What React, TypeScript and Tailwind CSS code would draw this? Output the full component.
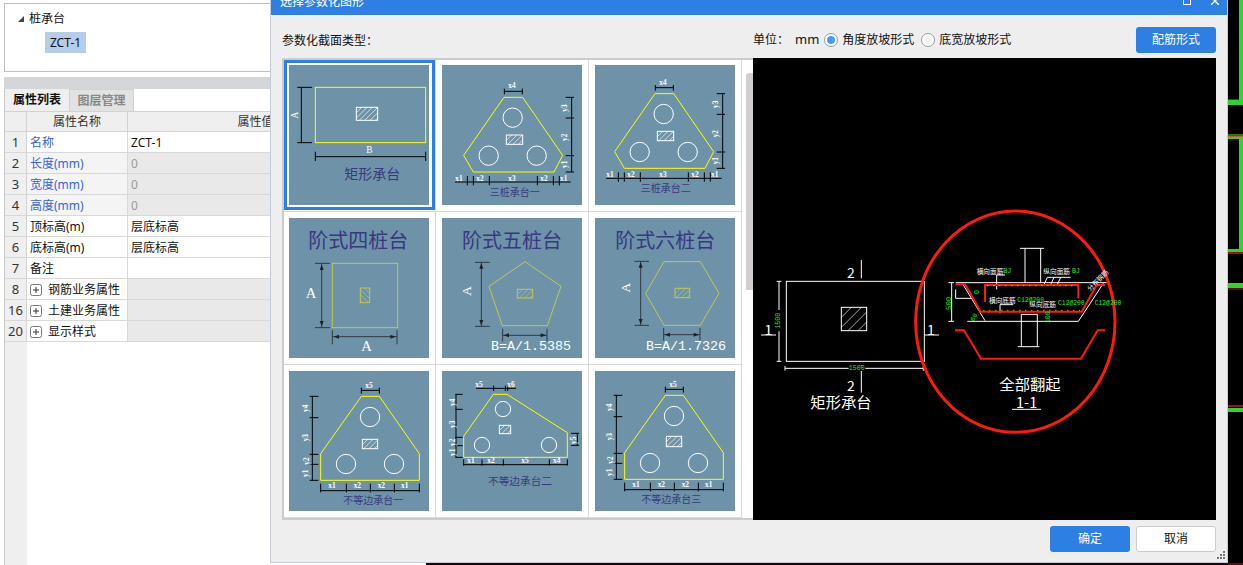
import React from 'react';

const rows = [
  { no: '1', name: '名称', value: 'ZCT-1', blue: true },
  { no: '2', name: '长度(mm)', value: '0', blue: true, locked: true },
  { no: '3', name: '宽度(mm)', value: '0', blue: true, locked: true },
  { no: '4', name: '高度(mm)', value: '0', blue: true, locked: true },
  { no: '5', name: '顶标高(m)', value: '层底标高' },
  { no: '6', name: '底标高(m)', value: '层底标高' },
  { no: '7', name: '备注', value: '' },
  { no: '8', name: '钢筋业务属性', group: true },
  { no: '16', name: '土建业务属性', group: true },
  { no: '20', name: '显示样式', group: true },
];

// all card drawings use a 420 unit box, shown at 140px (1px = 3 units)
function Card({ children }: { children: React.ReactNode }) {
  return (
    <svg viewBox="0 0 420 420" className="block h-[140px] w-[140px] bg-[#6e93a9]" fontFamily="'Noto Sans CJK SC', sans-serif">
      {children}
    </svg>
  );
}

function Lines({ d, color = '#000000' }: { d: string; color?: string }) {
  return <path d={d} fill="none" stroke={color} strokeWidth={3} />;
}

function Hatch({ x, y, w, h, color = '#ffffff', down = false }: { x: number; y: number; w: number; h: number; color?: string; down?: boolean }) {
  const step = 16;
  const marks = [];
  for (let i = step; i < w + h; i += step) {
    const x1 = Math.min(i, w);
    const y1 = i > w ? i - w : 0;
    const x2 = i > h ? i - h : 0;
    const y2 = Math.min(i, h);
    marks.push(
      down ? (
        <line key={i} x1={x + w - x1} y1={y + y1} x2={x + w - x2} y2={y + y2} stroke={color} strokeWidth={2} />
      ) : (
        <line key={i} x1={x + x1} y1={y + y1} x2={x + x2} y2={y + y2} stroke={color} strokeWidth={2} />
      ),
    );
  }
  return (
    <g>
      {marks}
      <rect x={x} y={y} width={w} height={h} fill="none" stroke={color} strokeWidth={3} />
    </g>
  );
}

function Tag({ x, y, t, rot = false }: { x: number; y: number; t: string; rot?: boolean }) {
  return (
    <text
      x={x}
      y={y}
      fill="#ffffff"
      fontSize={22}
      fontWeight={700}
      fontFamily="'Liberation Serif', serif"
      textAnchor="middle"
      dominantBaseline="central"
      transform={rot ? `rotate(-90 ${x} ${y})` : undefined}
    >
      {t}
    </text>
  );
}

function Title({ x, y, t, size = 30 }: { x: number; y: number; t: string; size?: number }) {
  return (
    <text x={x} y={y} fill="#38387f" fontSize={size} textAnchor="middle" dominantBaseline="central">
      {t}
    </text>
  );
}

function Holes({ pts, r = 29 }: { pts: number[][]; r?: number }) {
  return (
    <g>
      {pts.map((p) => (
        <circle key={p[0]} cx={p[0]} cy={p[1]} r={r} fill="none" stroke="#ffffff" strokeWidth={3} />
      ))}
    </g>
  );
}

function RectCard() {
  return (
    <Card>
      <rect x={79} y={67} width={331} height={166} fill="none" stroke="#ffff00" strokeWidth={3} />
      <Hatch x={202} y={127} w={64} h={39} />
      <Lines d="M37 67V233M25 67H69M25 233H69M79 275H410M79 260V288M410 260V288" />
      <text x={18} y={150} fill="#ffffff" fontSize={28} fontFamily="'Liberation Serif', serif" textAnchor="middle" dominantBaseline="central" transform="rotate(-90 18 150)">A</text>
      <text x={241} y={254} fill="#ffffff" fontSize={28} fontFamily="'Liberation Serif', serif" textAnchor="middle" dominantBaseline="central">B</text>
      <Title x={250} y={325} t="矩形承台" size={42} />
    </Card>
  );
}

function ThreePile({ dx, dy, title }: { dx: number; dy: number; title: string }) {
  return (
    <Card>
      <g transform={`translate(${dx} ${dy})`}>
        <polygon points="180,86 236,86 356,260 330,310 88,310 59,260" fill="none" stroke="#ffff00" strokeWidth={3} />
        <Holes pts={[[206, 147], [134, 261], [278, 261]]} />
        <Hatch x={187} y={199} w={49} h={28} />
        <Lines d="M181 68H235M181 60V77M235 60V77M383 86V310M365 86H390M365 148H390M365 261H390M365 310H390M33 340H380M70 322V350M88 322V350M136 322V350M280 322V350M328 322V350M346 322V350" />
        <Tag x={204} y={51} t="x4" />
        <Tag x={363} y={118} t="y3" rot />
        <Tag x={363} y={206} t="y2" rot />
        <Tag x={363} y={287} t="y1" rot />
        <Tag x={45} y={329} t="x1" />
        <Tag x={108} y={329} t="x2" />
        <Tag x={204} y={329} t="x3" />
        <Tag x={300} y={329} t="x2" />
        <Tag x={359} y={329} t="x1" />
        <Title x={212} y={368} t={title} />
      </g>
    </Card>
  );
}

function Arrows({ d }: { d: string }) {
  return <path d={d} fill="#1d2125" />;
}

function FourPile() {
  return (
    <Card>
      <Title x={208} y={64} t="阶式四桩台" size={60} />
      <rect x={130} y={136} width={196} height={193} fill="none" stroke="#c4c655" strokeWidth={3} />
      <Hatch x={214} y={210} w={28} h={44} color="#c4c655" down />
      <Lines color="#2f3a42" d="M98 136V329M78 136H123M78 329H123M130 356H324M130 336V379M324 336V379" />
      <Arrows d="M98 140L92 156H104ZM98 325L92 309H104ZM134 356L150 350V362ZM320 356L304 350V362Z" />
      <text x={66} y={224} fill="#ffffff" fontSize={44} fontFamily="'Liberation Serif', serif" textAnchor="middle" dominantBaseline="central">A</text>
      <text x={233} y={384} fill="#ffffff" fontSize={44} fontFamily="'Liberation Serif', serif" textAnchor="middle" dominantBaseline="central">A</text>
    </Card>
  );
}

function PolyPile({
  title, titleX, pts, hatch, vx, vy, hy, hx, ax, ay, formula, fx,
}: {
  title: string; titleX: number; pts: string; hatch: number[]; vx: number; vy: number[]; hy: number; hx: number[]; ax: number; ay: number; formula: string; fx: number;
}) {
  return (
    <Card>
      <Title x={titleX} y={64} t={title} size={60} />
      <polygon points={pts} fill="none" stroke="#c4c655" strokeWidth={3} />
      <Hatch x={hatch[0]} y={hatch[1]} w={hatch[2]} h={hatch[3]} color="#c4c655" />
      <Lines color="#2f3a42" d={`M${vx} ${vy[0]}V${vy[1]}M${vx - 19} ${vy[0]}H${vx + 25}M${vx - 19} ${vy[1]}H${vx + 25}M${hx[0]} ${hy}H${hx[1]}M${hx[0]} ${hy - 20}V${hy + 18}M${hx[1]} ${hy - 20}V${hy + 18}`} />
      <Arrows d={`M${vx} ${vy[0] + 3}L${vx - 6} ${vy[0] + 19}H${vx + 6}ZM${vx} ${vy[1] - 3}L${vx - 6} ${vy[1] - 19}H${vx + 6}ZM${hx[0] + 3} ${hy}L${hx[0] + 19} ${hy - 6}V${hy + 6}ZM${hx[1] - 3} ${hy}L${hx[1] - 19} ${hy - 6}V${hy + 6}Z`} />
      <text x={ax} y={ay} fill="#ffffff" fontSize={40} fontFamily="'Liberation Serif', serif" textAnchor="middle" dominantBaseline="central" transform={`rotate(-90 ${ax} ${ay})`}>A</text>
      <text x={fx} y={396} fill="#ffffff" fontSize={40} fontFamily="'Liberation Mono', monospace">{formula}</text>
    </Card>
  );
}

function UnequalA({ dx, dy, hatchY, hatchH, title, titleX }: { dx: number; dy: number; hatchY: number; hatchH: number; title: string; titleX: number }) {
  return (
    <Card>
      <g transform={`translate(${dx} ${dy})`}>
        <polygon points="217,76 271,76 391,248 391,328 95,328 95,248" fill="none" stroke="#ffff00" strokeWidth={3} />
        <Holes pts={[[243, 138], [171, 279], [315, 279]]} />
        <Hatch x={220} y={hatchY} w={46} h={hatchH} />
        <Lines d="M217 58H271M217 50V68M271 50V68M70 76V328M62 76H88M62 140H88M62 250H88M62 280H88M62 328H88M95 359H391M95 338V364M172 338V364M244 338V364M316 338V364M391 338V364" />
        <Tag x={240} y={44} t="x5" />
        <Tag x={51} y={112} t="y4" rot />
        <Tag x={51} y={200} t="y3" rot />
        <Tag x={51} y={270} t="y2" rot />
        <Tag x={51} y={307} t="y1" rot />
        <Tag x={129} y={344} t="x1" />
        <Tag x={205} y={344} t="x2" />
        <Tag x={277} y={344} t="x2" />
        <Tag x={347} y={344} t="x1" />
      </g>
      <Title x={titleX} y={386 + (dy < 0 ? -3 : 0)} t={title} />
    </Card>
  );
}

function UnequalB() {
  return (
    <Card>
      <polygon points="154,70 195,70 376,185 376,259 65,259 65,196" fill="none" stroke="#ffff00" strokeWidth={3} />
      <Holes pts={[[183, 114], [120, 222], [321, 222]]} r={23} />
      <Hatch x={172} y={163} w={34} h={25} />
      <Lines d="M102 52H222M155 44V60M190 44V60M197 44V60M42 70V259M40 70H62M40 115H62M40 199H62M40 224H62M40 259H62M406 187V223M387 187H411M387 223H411M65 281H376M65 265V284M120 265V284M184 265V284M322 265V284M376 265V284" />
      <Tag x={111} y={40} t="x5" />
      <Tag x={207} y={40} t="x6" />
      <Tag x={32} y={94} t="y4" rot />
      <Tag x={32} y={160} t="y3" rot />
      <Tag x={32} y={214} t="y2" rot />
      <Tag x={32} y={244} t="y1" rot />
      <Tag x={394} y={208} t="y5" rot />
      <Tag x={87} y={268} t="x1" />
      <Tag x={147} y={268} t="x2" />
      <Tag x={249} y={268} t="x5" />
      <Tag x={344} y={268} t="x4" />
      <Title x={234} y={329} t="不等边承台二" size={32} />
    </Card>
  );
}

function CadText({ x, y, t, size = 20, color = '#ffffff', rot = 0, mono = false }: { x: number; y: number; t: string; size?: number; color?: string; rot?: number; mono?: boolean }) {
  return (
    <text
      x={x}
      y={y}
      fill={color}
      fontSize={size}
      fontFamily={mono ? "'Liberation Mono', monospace" : undefined}
      textAnchor="middle"
      dominantBaseline="central"
      transform={rot ? `rotate(${rot} ${x} ${y})` : undefined}
    >
      {t}
    </text>
  );
}

// viewBox is in 3x units counted from (750,230) on the page
function Preview() {
  return (
    <svg viewBox="9 -516 1389 1386" className="block h-[462px] w-[463px] bg-black" fontFamily="'Noto Sans CJK SC', sans-serif">
      <g fill="none" stroke="#ffffff" strokeWidth={3}>
        <rect x={109} y={154} width={414} height={240} />
        <rect x={274} y={232} width={76} height={70} />
        <path d="M274 262L304 232M274 292L334 232M294 302L350 246M324 302L350 276" strokeWidth={2} />
        <path d="M334 90V145M334 405V488M33 315H78M523 315H567M87 154V394M80 154H94M80 394H94M105 415H520M105 408V422M520 408V422" />
        <path d="M617 158H1070M825 55V158M872 55V158M810 55H882M640 165L705 272M652 274H985M985 274L1060 160M814 253H862M814 253V348M862 253V348M803 350H868M605 158V274M595 158H612M595 274H612" />
        <path d="M786 538H873M740 135V178M740 135H765M750 224V250M750 224H790M880 168L892 142M900 168L912 142M920 168L932 142M892 142H962" />
        <path d="M617 205H670M617 178V205" />
      </g>
      <g fill="none" stroke="#ff1a10">
        <ellipse cx={796} cy={275} rx={299} ry={332} strokeWidth={9} />
        <path d="M617 163H645L692 245H995L1040 165H1065" strokeWidth={6} />
        <path d="M705 215V165H985V205" strokeWidth={6} />
        <path d="M615 301H642L693 386H993L1043 301H1065" strokeWidth={6} />
      </g>
      <path d="M712 167H980M700 241H990" stroke="#ffff00" strokeWidth={3} strokeDasharray="3 15" />
      <CadText x={303} y={126} t="2" size={42} />
      <CadText x={303} y={465} t="2" size={42} />
      <CadText x={55} y={298} t="1" size={42} />
      <CadText x={543} y={298} t="1" size={42} />
      <rect x={72} y={240} width={28} height={64} fill="#000000" />
      <rect x={296} y={407} width={50} height={16} fill="#000000" />
      <CadText x={85} y={272} t="1500" size={20} color="#22ee22" rot={-90} mono />
      <CadText x={320} y={415} t="1500" size={20} color="#22ee22" mono />
      <CadText x={273} y={513} t="矩形承台" size={46} />
      <CadText x={840} y={460} t="全部翻起" size={46} />
      <CadText x={830} y={515} t="1-1" size={44} />
      <CadText x={720} y={124} t="横向面筋" size={20} />
      <CadText x={772} y={124} t="BJ" size={20} color="#22ee22" mono />
      <CadText x={920} y={124} t="纵向面筋" size={20} />
      <CadText x={978} y={124} t="BJ" size={20} color="#22ee22" mono />
      <CadText x={757} y={211} t="横向底筋" size={20} />
      <CadText x={842} y={211} t="C12@200" size={19} color="#22ee22" mono />
      <CadText x={878} y={221} t="纵向底筋" size={20} />
      <CadText x={964} y={220} t="C12@200" size={19} color="#22ee22" mono />
      <CadText x={1074} y={220} t="C12@200" size={19} color="#22ee22" mono />
      <CadText x={1042} y={150} t="分布钢筋" size={20} rot={-45} />
      <CadText x={598} y={220} t="500" size={22} color="#22ee22" rot={-90} mono />
      <CadText x={680} y={186} t="0" size={20} color="#22ee22" rot={-90} mono />
      <CadText x={893} y={262} t="100" size={20} color="#22ee22" rot={-90} mono />
      <CadText x={672} y={262} t="60" size={20} color="#22ee22" rot={-60} mono />
    </svg>
  );
}

function Radio({ on, label }: { on?: boolean; label: string }) {
  return (
    <span className="flex items-center gap-[4px]">
      <span className="flex h-[14px] w-[14px] items-center justify-center rounded-full border border-[#9a9a9a] bg-white">
        {on && <span className="h-[8px] w-[8px] rounded-full bg-[#4b9bf5]" />}
      </span>
      {label}
    </span>
  );
}

export default function App() {
  return (
    <div className="flex h-[565px] w-[1243px] overflow-hidden bg-white text-[12px] leading-none text-[#111] font-['Noto_Sans','Noto_Sans_CJK_SC',sans-serif]">
      {/* left panel behind the dialog */}
      <aside className="flex h-full w-[270px] shrink-0 flex-col overflow-hidden pl-[4px] pt-[3px]">
        <div className="h-[69px] shrink-0 border border-r-0 border-[#c0c0c0] pl-[13px] pt-[2px]">
          <div className="flex h-[26px] items-center gap-[5px]">
            <span className="h-0 w-0 border-b-[6px] border-l-[6px] border-b-[#444] border-l-transparent" />
            <span>桩承台</span>
          </div>
          <div className="ml-[27px] flex h-[21px] w-[41px] items-center justify-center bg-[#b6cdea]">ZCT-1</div>
        </div>
        <div className="mt-[5px] h-[12px] shrink-0 bg-[#d4d6da]" />
        <div className="flex h-[22px] shrink-0 border-l border-[#c8c8c8]">
          <div className="flex w-[64px] items-center justify-center bg-[#efefef] font-bold">属性列表</div>
          <div className="flex w-[65px] items-center justify-center border border-b-0 border-[#d0d0d0] bg-[#e2e2e2] font-bold text-[#888]">图层管理</div>
        </div>
        <div className="flex min-h-0 flex-1 flex-col border-l border-[#c8c8c8]">
          <div className="flex h-[21px] w-[378px] shrink-0 border-y border-[#d2d2d2] bg-[#efefef]">
            <div className="w-[22px] border-r border-[#d2d2d2]" />
            <div className="flex w-[101px] items-center justify-center border-r border-[#d2d2d2] text-[#333]">属性名称</div>
            <div className="flex flex-1 items-center justify-center text-[#333]">属性值</div>
          </div>
          {rows.map((r) => (
            <div key={r.no} className="flex h-[21px] w-[378px] shrink-0 border-b border-[#d8d8d8]">
              <div className="flex w-[22px] items-center justify-center border-r border-[#d2d2d2] bg-[#efefef] pt-[1px] text-[13px] text-[#333]">{r.no}</div>
              <div className={`flex w-[101px] items-center border-r border-[#d8d8d8] pl-[3px] pt-[1px] ${r.locked ? 'bg-[#f4f4f4]' : 'bg-white'} ${r.blue ? 'text-[#3763dc]' : ''}`}>
                {r.group && (
                  <svg viewBox="0 0 12 12" className="mr-[6px] h-[12px] w-[12px] shrink-0" fill="none" stroke="#777">
                    <rect x={0.5} y={0.5} width={11} height={11} rx={2} />
                    <path d="M3 6H9M6 3V9" stroke="#333" />
                  </svg>
                )}
                {r.name}
              </div>
              <div className={`flex flex-1 items-center pl-[3px] pt-[1px] ${r.locked || r.group ? 'bg-[#e9e9e9]' : 'bg-white'} ${r.locked ? 'text-[#999]' : ''}`}>{r.value}</div>
            </div>
          ))}
          <div className="min-h-0 w-[22px] flex-1 bg-[#efefef]" />
        </div>
      </aside>

      {/* dialog */}
      <div className="flex h-full w-[958px] shrink-0 flex-col">
        <section className="flex h-[563px] flex-col border border-t-0 border-[#c5cbdc] bg-[#eeeeee]">
          <header className="flex h-[15px] shrink-0 items-end justify-between overflow-hidden bg-[#2d7fe3] pl-[9px] pr-[8px] text-white">
            <span className="mb-[6px] text-[12px] leading-[14px]">选择参数化图形</span>
            <div className="flex items-end gap-[20px] pb-[10px]">
              <span className="h-[8px] w-[8px] border border-white" />
              <svg viewBox="0 0 8 8" className="h-[8px] w-[8px]" stroke="#fff" strokeWidth={1.4}>
                <path d="M0 0L8 8M8 0L0 8" />
              </svg>
            </div>
          </header>

          <div className="flex h-[43px] shrink-0 items-center justify-between pl-[11px] pr-[11px] pt-[6px]">
            <div className="flex w-[471px] items-center pt-[2px]">参数化截面类型：</div>
            <div className="flex flex-1 items-center">
              <span>单位：</span>
              <span className="ml-[6px] mr-[5px] text-[13px]">mm</span>
              <Radio on label="角度放坡形式" />
              <span className="w-[7px]" />
              <Radio label="底宽放坡形式" />
              <button className="ml-auto flex h-[26px] w-[80px] items-center justify-center rounded-[3px] bg-[#2d7fe3] text-white">配筋形式</button>
            </div>
          </div>

          <div className="flex h-[462px] shrink-0 pl-[11px] pr-[11px]">
            <div className="relative h-[462px] w-[471px] border-2 border-r-0 border-[#cccccc] bg-white">
              <div className="grid grid-cols-[152px_153px_153px] grid-rows-[152px_153px_153px]">
                <div className="border-b border-r border-[#d8d8d8]">
                  <div className="h-[150px] w-[151px] border-[3px] border-[#2d7fe3] p-[2px]"><RectCard /></div>
                </div>
                <div className="border-b border-r border-[#d8d8d8] pl-[6px] pt-[5px]"><ThreePile dx={6} dy={11} title="三桩承台一" /></div>
                <div className="border-b border-r border-[#d8d8d8] pl-[6px] pt-[5px]"><ThreePile dx={0} dy={0} title="三桩承台二" /></div>
                <div className="border-b border-r border-[#d8d8d8] pl-[5px] pt-[6px]"><FourPile /></div>
                <div className="border-b border-r border-[#d8d8d8] pl-[6px] pt-[6px]">
                  <PolyPile title="阶式五桩台" titleX={210} pts="249,131 357,205 316,323 181,323 141,205" hatch={[226, 214, 46, 26]} vx={118} vy={[133, 325]} hy={352} hx={[182, 315]} ax={74} ay={219} formula="B=A/1.5385" fx={147} />
                </div>
                <div className="border-b border-r border-[#d8d8d8] pl-[6px] pt-[6px]">
                  <PolyPile title="阶式六桩台" titleX={211} pts="207,131 316,131 372,226 316,322 207,322 152,226" hatch={[240, 211, 44, 28]} vx={137} vy={[130, 322]} hy={350} hx={[206, 315]} ax={93} ay={209} formula="B=A/1.7326" fx={153} />
                </div>
                <div className="border-b border-r border-[#d8d8d8] pl-[5px] pt-[6px]"><UnequalA dx={0} dy={0} hatchY={205} hatchH={28} title="不等边承台一" titleX={253} /></div>
                <div className="border-b border-r border-[#d8d8d8] pl-[6px] pt-[6px]"><UnequalB /></div>
                <div className="border-b border-r border-[#d8d8d8] pl-[6px] pt-[6px]"><UnequalA dx={-6} dy={-3} hatchY={199} hatchH={31} title="不等边承台三" titleX={229} /></div>
              </div>
              <div className="absolute right-0 top-[13px] h-[217px] w-[7px] rounded-tl-[3px] bg-[#cfcfcf]" />
            </div>
            <Preview />
          </div>

          <div className="relative flex flex-1 items-start justify-end gap-[6px] pr-[11px] pt-[6px]">
            <button className="flex h-[26px] w-[80px] items-center justify-center rounded-[3px] bg-[#2d7fe3] text-white">确定</button>
            <button className="flex h-[26px] w-[80px] items-center justify-center rounded-[3px] border border-[#cccccc] bg-white">取消</button>
            <svg viewBox="0 0 10 10" className="absolute bottom-[1px] right-[1px] h-[10px] w-[10px]" fill="#777">
              <path d="M7 0h2v2H7zM4 3h2v2H4zM7 3h2v2H7zM1 6h2v2H1zM4 6h2v2H4zM7 6h2v2H7z" />
            </svg>
          </div>
        </section>
        <div className="flex h-[2px] shrink-0">
          <div className="w-[156px] bg-white" />
          <div className="flex-1 bg-[#1a0505]" />
        </div>
      </div>

      {/* CAD canvas peeking out on the right */}
      <svg viewBox="0 0 15 565" className="block h-[565px] w-[15px] shrink-0 bg-black">
        <rect x={0} y={99} width={15} height={1} fill="#a01010" />
        <rect x={11} y={0} width={4} height={100} fill="#2fd52f" />
        <rect x={0} y={100} width={15} height={5} fill="#2fd52f" />
        <rect x={0} y={134} width={15} height={2} fill="#1c7a1c" />
        <rect x={0} y={136} width={15} height={1} fill="#e05020" />
        <rect x={0} y={137} width={15} height={2} fill="#2fd52f" />
        <rect x={11} y={139} width={4} height={111} fill="#2fd52f" />
        <rect x={0} y={249} width={15} height={3} fill="#2fd52f" />
        <rect x={0} y={252} width={15} height={2} fill="#a01010" />
        <rect x={0} y={283} width={15} height={5} fill="#2fd52f" />
        <rect x={0} y={288} width={15} height={2} fill="#6a0808" />
        <rect x={0} y={405} width={15} height={2} fill="#a01010" />
        <rect x={0} y={408} width={15} height={4} fill="#2fd52f" />
        <rect x={0} y={563} width={15} height={2} fill="#6a0808" />
      </svg>
    </div>
  );
}
